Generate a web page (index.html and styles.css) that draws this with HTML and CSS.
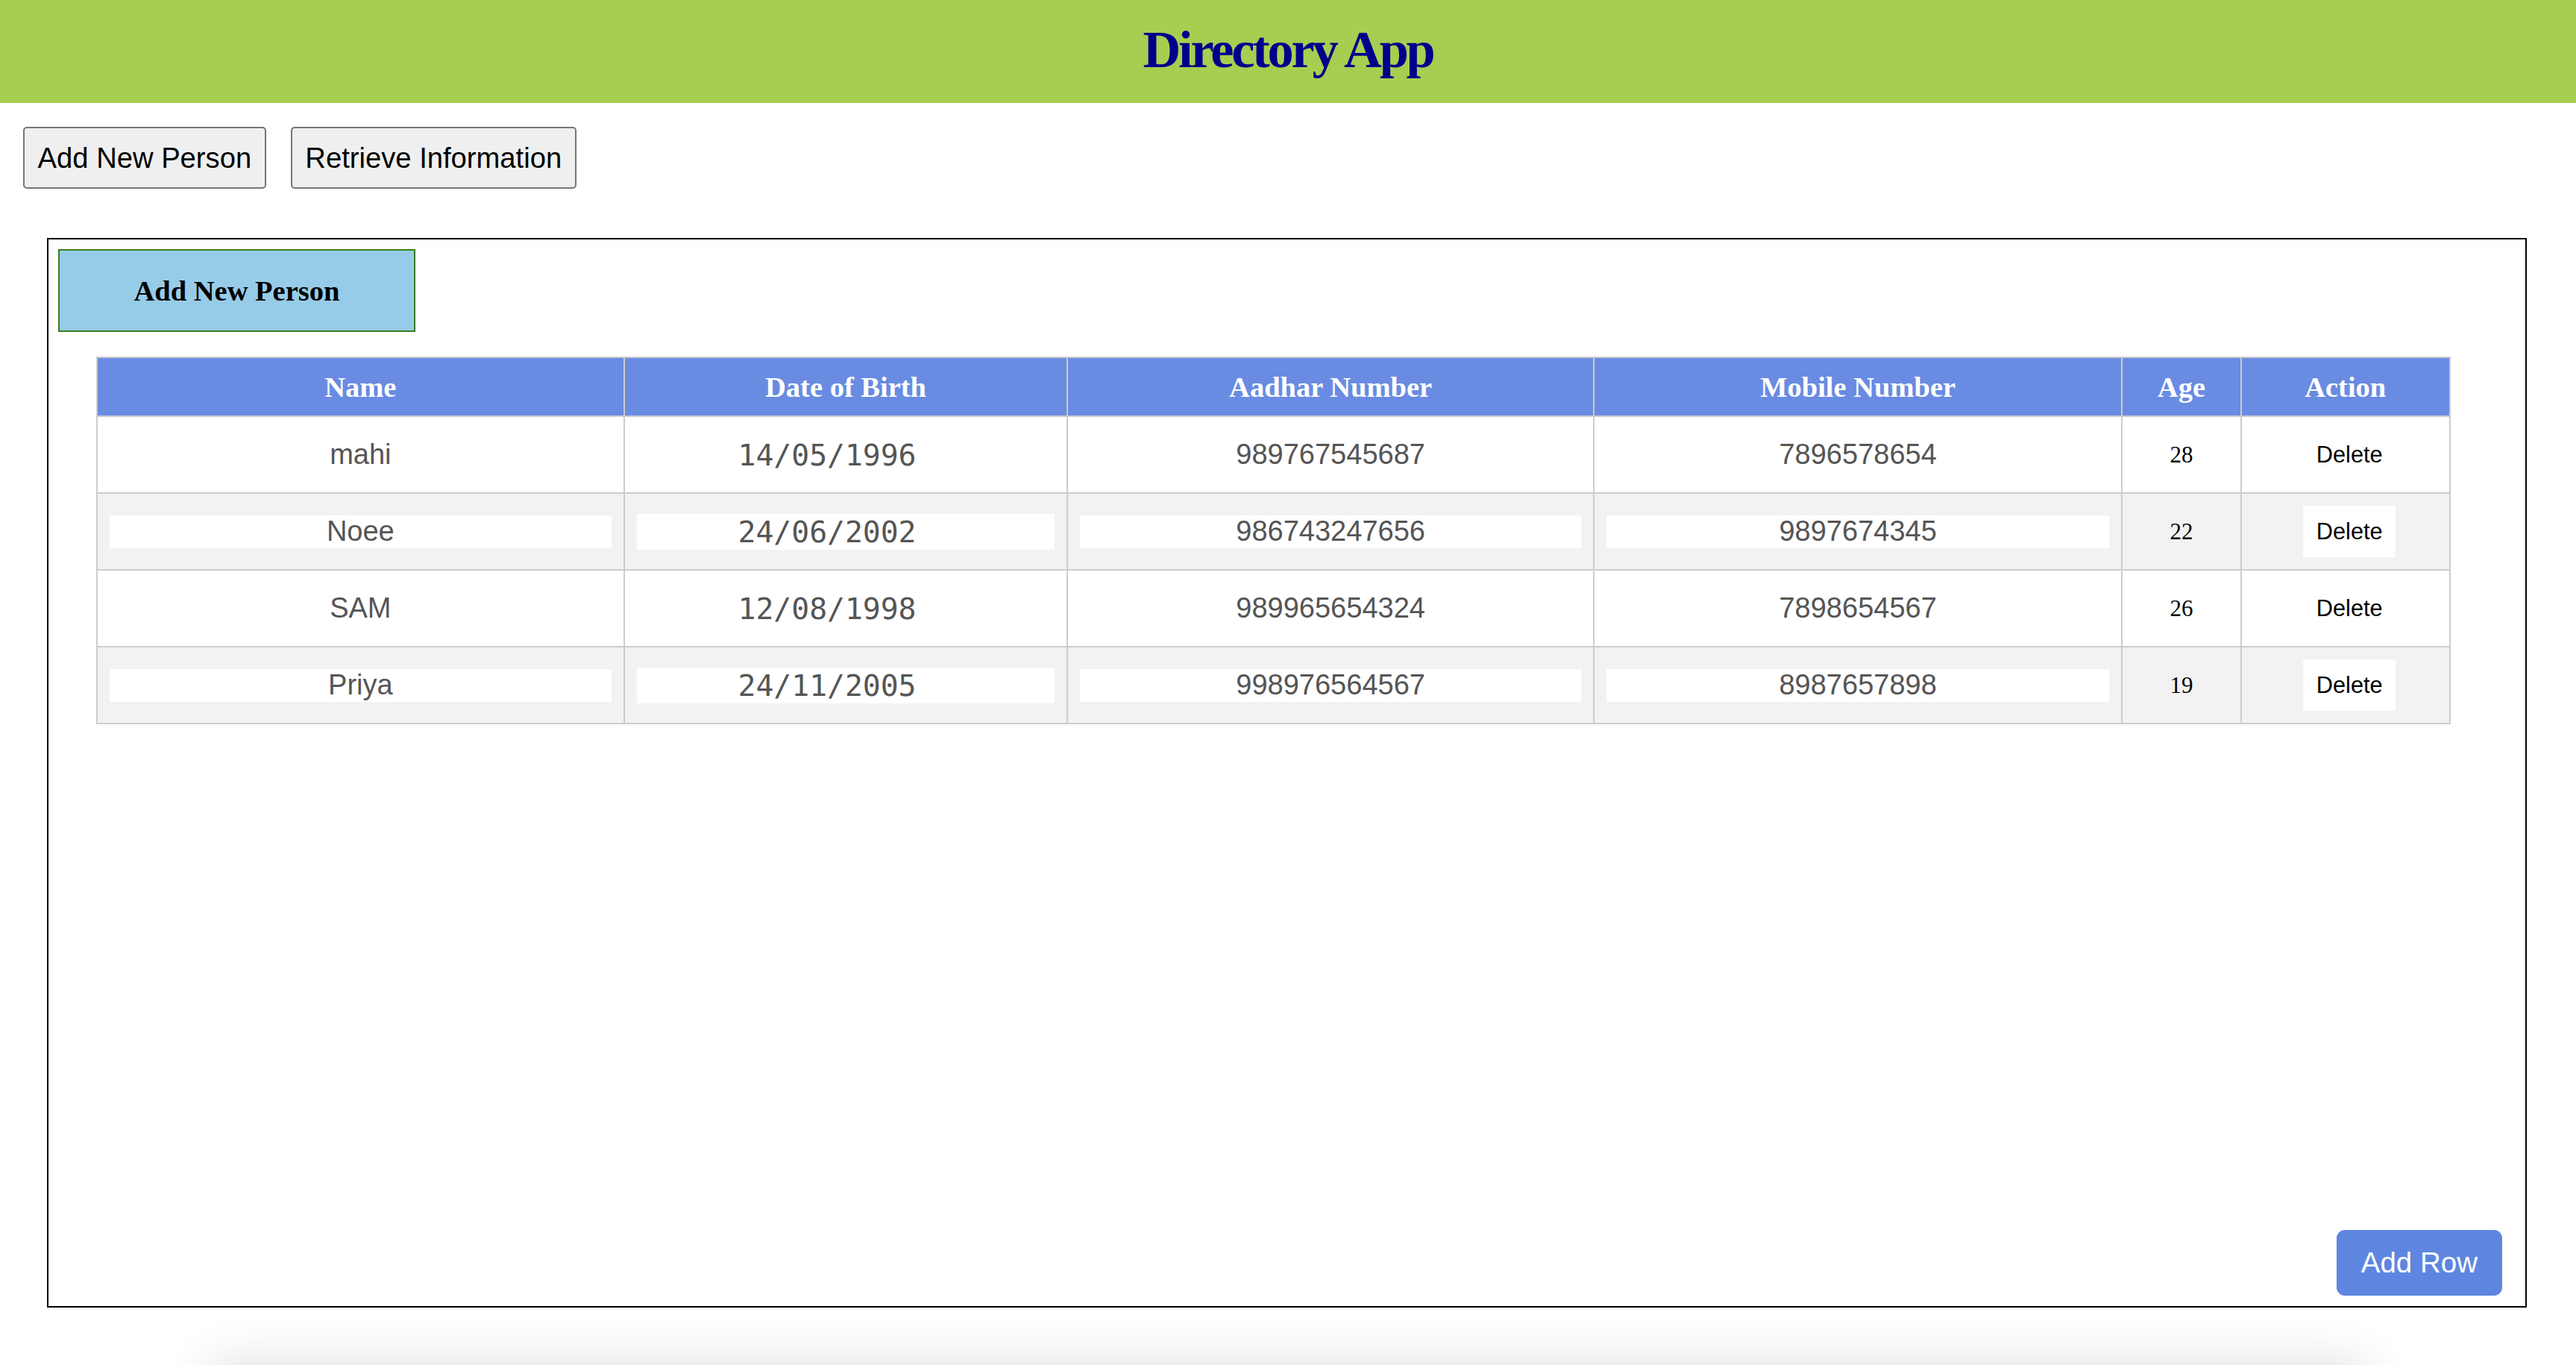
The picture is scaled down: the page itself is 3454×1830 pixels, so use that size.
FILE: index.html
```html
<!DOCTYPE html>
<html lang="en">
<head>
<meta charset="utf-8">
<title>Directory App</title>
<link rel="stylesheet" href="styles.css">
</head>
<body>
<header class="app-header">
  <h1 class="app-title">Directory App</h1>
</header>
<nav class="tabs">
  <button class="tab-btn">Add New Person</button>
  <button class="tab-btn">Retrieve Information</button>
</nav>
<main class="panel">
  <h2 class="panel-title">Add New Person</h2>
  <table class="people">
    <colgroup>
      <col class="c-name">
      <col class="c-dob">
      <col class="c-aadhar">
      <col class="c-mobile">
      <col class="c-age">
      <col class="c-action">
    </colgroup>
    <thead>
      <tr>
        <th>Name</th>
        <th>Date of Birth</th>
        <th>Aadhar Number</th>
        <th>Mobile Number</th>
        <th>Age</th>
        <th>Action</th>
      </tr>
    </thead>
    <tbody>
      <tr>
        <td><input class="field" type="text" value="mahi"></td>
        <td><input class="field field-date" type="text" value="14/05/1996"></td>
        <td><input class="field" type="text" value="989767545687"></td>
        <td><input class="field" type="text" value="7896578654"></td>
        <td class="age">28</td>
        <td class="action"><button class="del-btn">Delete</button></td>
      </tr>
      <tr>
        <td><input class="field" type="text" value="Noee"></td>
        <td><input class="field field-date" type="text" value="24/06/2002"></td>
        <td><input class="field" type="text" value="986743247656"></td>
        <td><input class="field" type="text" value="9897674345"></td>
        <td class="age">22</td>
        <td class="action"><button class="del-btn">Delete</button></td>
      </tr>
      <tr>
        <td><input class="field" type="text" value="SAM"></td>
        <td><input class="field field-date" type="text" value="12/08/1998"></td>
        <td><input class="field" type="text" value="989965654324"></td>
        <td><input class="field" type="text" value="7898654567"></td>
        <td class="age">26</td>
        <td class="action"><button class="del-btn">Delete</button></td>
      </tr>
      <tr>
        <td><input class="field" type="text" value="Priya"></td>
        <td><input class="field field-date" type="text" value="24/11/2005"></td>
        <td><input class="field" type="text" value="998976564567"></td>
        <td><input class="field" type="text" value="8987657898"></td>
        <td class="age">19</td>
        <td class="action"><button class="del-btn">Delete</button></td>
      </tr>
    </tbody>
  </table>
  <button class="add-row">Add Row</button>
</main>
<div class="footer-card"></div>
</body>
</html>
```
FILE: styles.css
```css
html {
  overflow: hidden;
}

body {
  margin: 0;
  background: #ffffff;
  font-family: "Liberation Serif", "Times New Roman", serif;
  color: #000;
}

.app-header {
  background: #a7ce50;
  height: 138px;
  box-sizing: border-box;
  padding-top: 26px;
  text-align: center;
}

.app-title {
  margin: 0;
  font-size: 70.4px;
  line-height: 81px;
  font-weight: bold;
  letter-spacing: -3.2px;
  color: #00008b;
}

.tabs {
  display: flex;
  gap: 33px;
  padding: 32px 0 0 31px;
}

.tab-btn {
  font-family: "Liberation Sans", Arial, sans-serif;
  font-size: 38.2px;
  line-height: 43.8px;
  padding: 17.6px;
  border: 2px solid #767676;
  border-radius: 5px;
  background: #efefef;
  color: #000;
}

.panel {
  margin: 66px 66px 0 63px;
  height: 1434px;
  box-sizing: border-box;
  border: 2px solid #000;
  padding: 13px;
  display: flex;
  flex-direction: column;
}

.panel-title {
  margin: 0;
  align-self: flex-start;
  width: 479px;
  height: 111.5px;
  box-sizing: border-box;
  border: 2px solid #3a7d1f;
  background: #97cce8;
  display: flex;
  align-items: center;
  justify-content: center;
  font-size: 38.5px;
  font-weight: bold;
}

.people {
  margin: 33px 0 0 50.5px;
  width: 3157px;
  border-collapse: collapse;
  table-layout: fixed;
}

.c-name { width: 22.43%; }
.c-dob { width: 18.82%; }
.c-aadhar { width: 22.39%; }
.c-mobile { width: 22.43%; }
.c-age { width: 5.07%; }
.c-action { width: 8.86%; }

.people th {
  background: #698be2;
  color: #fff;
  font-size: 38.5px;
  line-height: 44px;
  font-weight: bold;
  padding: 16.5px 16px;
  border: 2px solid #cccccc;
  text-align: center;
}

.people td {
  padding: 16px;
  border: 2px solid #cccccc;
  text-align: center;
  vertical-align: middle;
}

.people tbody tr:nth-child(even) {
  background: #f2f2f2;
}

.field {
  display: block;
  width: 100%;
  box-sizing: border-box;
  height: 43.6px;
  margin: 0;
  padding: 0;
  border: none;
  outline: none;
  background: #ffffff;
  font-family: "Liberation Sans", Arial, sans-serif;
  font-size: 38px;
  color: #555555;
  text-align: center;
}

.field-date {
  height: 48.6px;
  padding-right: 50px;
  font-family: "DejaVu Sans Mono", monospace;
  font-size: 39.7px;
}

.age {
  font-size: 31px;
  color: #000;
}

.del-btn {
  margin-left: 11px;
  font-family: "Liberation Sans", Arial, sans-serif;
  font-size: 30.8px;
  line-height: 35.4px;
  padding: 16.8px 17.6px;
  border: none;
  background: #ffffff;
  color: #000;
}

.add-row {
  margin-top: auto;
  margin-right: 18px;
  margin-bottom: 1px;
  align-self: flex-end;
  font-family: "Liberation Sans", Arial, sans-serif;
  font-size: 38.5px;
  line-height: 44px;
  padding: 22px 33px;
  border: none;
  border-radius: 11px;
  background: #5e86e1;
  color: #ffffff;
}

.footer-card {
  margin: 80px auto 0;
  width: 2890px;
  height: 300px;
  border-radius: 20px;
  background: #ffffff;
  box-shadow: 0 0 70px rgba(0, 0, 0, 0.16);
}
```
